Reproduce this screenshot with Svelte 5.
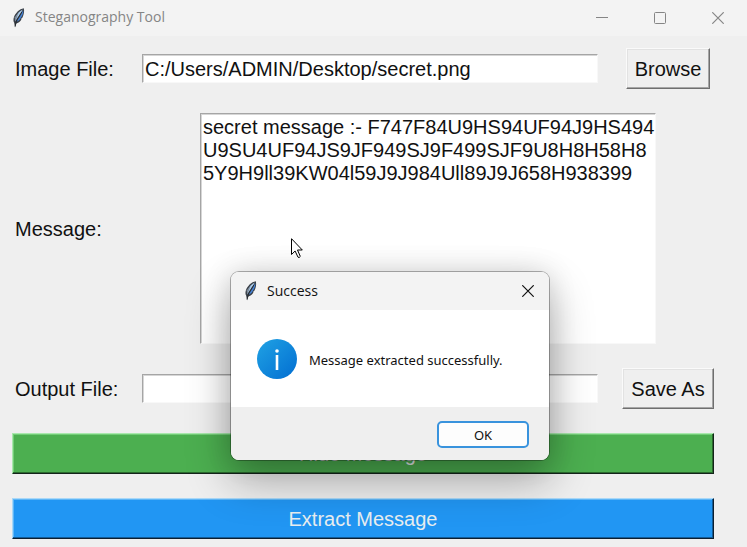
<script>
  let imagePath = $state('C:/Users/ADMIN/Desktop/secret.png');
  let message = $state(
    'secret message :- F747F84U9HS94UF94J9HS494U9SU4UF94JS9JF949SJ9F499SJF9U8H8H58H85Y9H9ll39KW04l59J9J984Ull89J9J658H938399'
  );
  let outputPath = $state('');
</script>

{#snippet feather()}
  <svg class="feather" viewBox="0 0 14 20" aria-hidden="true">
    <path d="M11.800.3C7.400 1.100 3.600 4.800 1.900 9.300c-.7 2.200-.6 4.300.3 5.500l.8 4.700 1.300-4c2.700-.6 4.500-2.300 5.200-4.500l-.5-.1 1.500-1.500C12 6.500 12.500 3 11.800.3Z" fill="#3a4048" />
    <path d="M10.800 1.500C8 2.600 5.300 5.500 3.900 9l-.8 4.500C5.500 10 8.500 6 10.800 1.500Z" fill="#a9c9e8" />
    <path d="M11.200 2.200C9.500 6.500 7 10 4.500 13.700c2.300-.8 3.700-2.300 4.500-4.200C10.700 7 11.600 4.500 11.200 2.200Z" fill="#4585dc" />
    <path d="M2.800 9.300 6.500 4.800 4.500 10.500 3 13.300Z" fill="#7d8a99" />
    <path d="M9.800 4C7 8.500 4.300 11 3.200 18.500" fill="none" stroke="#1c2025" stroke-width=".8" />
  </svg>
{/snippet}

{#snippet cross()}
  <svg viewBox="0 0 12 12" width="12" height="12" aria-hidden="true">
    <path d="M.3.3 11.700 11.700M11.700.3.3 11.700" fill="none" stroke="currentColor" stroke-width="1.200" />
  </svg>
{/snippet}

<main class="window">
  <header class="titlebar">
    {@render feather()}
    <h1>Steganography Tool</h1>
    <div class="controls">
      <button aria-label="Minimize">
        <svg viewBox="0 0 12 12" width="12" height="12"><path d="M0 5.500h12" stroke="currentColor" /></svg>
      </button>
      <button aria-label="Maximize">
        <svg viewBox="0 0 12 12" width="12" height="12"><rect x=".5" y=".5" width="11" height="11" rx="1" fill="none" stroke="currentColor" /></svg>
      </button>
      <button aria-label="Close">{@render cross()}</button>
    </div>
  </header>

  <form class="form" onsubmit={(e) => e.preventDefault()}>
    <label for="image">Image File:</label>
    <input id="image" type="text" bind:value={imagePath} />
    <button type="button" class="raised">Browse</button>

    <label for="message">Message:</label>
    <textarea id="message" spellcheck="false" bind:value={message}></textarea>

    <label for="output">Output File:</label>
    <input id="output" type="text" bind:value={outputPath} />
    <button type="button" class="raised">Save As</button>

    <button type="button" class="action hide">Hide Message</button>
    <button type="button" class="action extract">Extract Message</button>
  </form>

  <div class="dialog" role="dialog" aria-labelledby="dialog-title">
    <div class="dialog-title">
      {@render feather()}
      <h2 id="dialog-title">Success</h2>
      <button aria-label="Close dialog">{@render cross()}</button>
    </div>
    <div class="dialog-body">
      <svg class="info" viewBox="0 0 40 40" aria-hidden="true">
        <defs>
          <linearGradient id="info-fill" x1="0" y1="0" x2="1" y2="1">
            <stop offset=".1" stop-color="#1d9de2" />
            <stop offset=".9" stop-color="#0573d3" />
          </linearGradient>
        </defs>
        <circle cx="20" cy="20" r="20" fill="url(#info-fill)" />
        <circle cx="20" cy="12" r="1.800" fill="#fff" />
        <rect x="18.700" y="16" width="2.600" height="15" fill="#fff" />
      </svg>
      <p>Message extracted successfully.</p>
    </div>
    <div class="dialog-footer">
      <button>OK</button>
    </div>
  </div>

  <svg class="pointer" viewBox="0 0 12 21" aria-hidden="true">
    <path d="M.5.7v15.800l3.600-3.500 2.900 6.200q1.200 1 2.300-.8L6.500 12h4.800Z" fill="#fff" stroke="#000" />
  </svg>
</main>

<style>
  :global(body) {
    margin: 0;
    background: #efefef;
  }

  .window {
    position: relative;
    min-height: 100vh;
    overflow: hidden;
    background: #efefef;
    color: #111;
    font-family: "Liberation Sans", Arial, sans-serif;
    font-size: 20px;
    line-height: 23px;
  }

  * {
    box-sizing: border-box;
  }

  button,
  input,
  textarea {
    margin: 0;
    font: inherit;
    color: inherit;
    border-radius: 0;
    outline: none;
  }

  h1,
  h2,
  p {
    margin: 0;
    font-family: "Open Sans", "Noto Sans", sans-serif;
    font-weight: 400;
    line-height: 20px;
  }

  .titlebar {
    display: flex;
    align-items: center;
    height: 36px;
    padding-left: 12px;
    background: #f3f3f3;
    color: #858585;
  }

  .feather {
    width: 14px;
    height: 20px;
    flex: none;
  }

  h1 {
    margin-left: 9px;
    padding-bottom: 2px;
    font-size: 14px;
  }

  .controls {
    display: flex;
    align-self: stretch;
    margin-left: auto;
  }

  .controls button,
  .dialog-title button {
    display: grid;
    place-items: center;
    padding: 0;
    border: 0;
    background: transparent;
  }

  .controls button {
    width: 58px;
  }

  .form {
    display: grid;
    grid-template-columns: 106px minmax(0, 1fr) 92px;
    gap: 24px;
    align-items: center;
    padding: 12px 33px 8px 12px;
  }

  label {
    padding: 2px 0 0 3px;
    white-space: nowrap;
  }

  input,
  textarea {
    border: 1px solid;
    border-color: #a5a5a5 #f8f8f8 #f8f8f8 #a5a5a5;
    background: #fff;
    box-shadow: inset 1px 1px #d6d6d6;
  }

  input {
    width: 100%;
    height: 29px;
    padding: 1px 2px 0;
  }

  textarea {
    grid-column: 2 / 4;
    height: 231px;
    margin: 0 58px;
    padding: 2px 0 0 2px;
    resize: none;
    overflow: hidden;
    word-break: break-all;
  }

  .raised,
  .action {
    height: 41px;
    padding: 2px 8px 0;
    border: 1px solid;
    white-space: nowrap;
  }

  .raised {
    justify-self: center;
    border-color: #fafafa #6f6f6f #6f6f6f #fafafa;
    background: #efefef;
    box-shadow: inset -1px -1px #a6a6a6, inset 1px 1px #e2e2e2;
  }

  .action {
    grid-column: 1 / -1;
    color: #e8eef0;
  }

  .hide {
    border-color: #a9e8ad #14241a #14241a #a9e8ad;
    background: #4caf50;
    box-shadow: inset -1px -1px #2b6a2e, inset 1px 1px #72cd76;
  }

  .extract {
    border-color: #a9d8f8 #0c1f30 #0c1f30 #a9d8f8;
    background: #2196f3;
    box-shadow: inset -1px -1px #135c98, inset 1px 1px #5fb6f6;
  }

  .dialog {
    position: absolute;
    top: 271px;
    left: 230px;
    width: 320px;
    overflow: hidden;
    border: 1px solid rgba(0, 0, 0, 0.3);
    border-radius: 9px;
    background: #fff;
    background-clip: padding-box;
    color: #111;
    box-shadow: 0 20px 44px rgba(0, 0, 0, 0.3), 0 0 28px rgba(0, 0, 0, 0.12);
  }

  .dialog-title {
    display: flex;
    align-items: center;
    height: 38px;
    padding-left: 13px;
    background: #f3f3f3;
  }

  h2 {
    margin-left: 9px;
    font-size: 14px;
  }

  .dialog-title button {
    width: 42px;
    height: 38px;
    margin-left: auto;
  }

  .dialog-body {
    display: flex;
    align-items: center;
    gap: 12px;
    height: 97px;
    padding-left: 26px;
  }

  .info {
    width: 40px;
    height: 40px;
    flex: none;
  }

  p {
    padding-top: 2px;
    font-family: "Noto Sans", "Open Sans", sans-serif;
    font-size: 13px;
    white-space: nowrap;
  }

  .dialog-footer {
    display: flex;
    justify-content: flex-end;
    padding: 14px 20px 12px;
    background: #efefef;
  }

  .dialog-footer button {
    width: 92px;
    height: 27px;
    padding: 0;
    border: 2px solid #3993dd;
    border-radius: 5px;
    background: #fdfdfd;
    font-family: "Noto Sans", "Open Sans", sans-serif;
    font-size: 13px;
    line-height: 20px;
  }

  .pointer {
    position: absolute;
    top: 238px;
    left: 291px;
    width: 12px;
    height: 21px;
  }
</style>
